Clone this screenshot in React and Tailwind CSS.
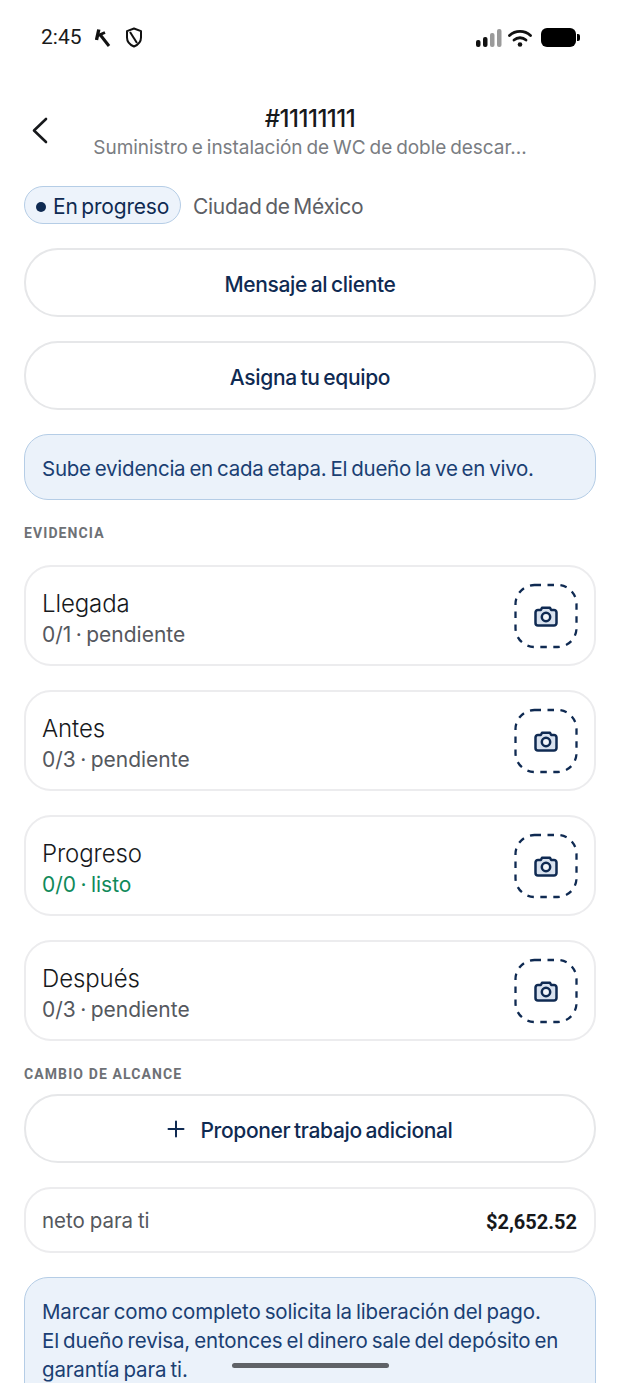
import React from "react";

function Camera() {
  return (
    <svg width="26" height="26" viewBox="0 0 26 26" fill="none">
      <path d="M2.500 9.500a2.500 2.500 0 0 1 2.500-2.500h2.800l1.200-2.200h8l1.200 2.200h2.800a2.500 2.500 0 0 1 2.500 2.500v10.500a2.500 2.500 0 0 1-2.500 2.500H5a2.500 2.500 0 0 1-2.500-2.500z" fill="#d9e2ef" stroke="#0f2a52" strokeWidth="2.500" strokeLinejoin="round" />
      <circle cx="13" cy="14" r="4.200" fill="#f3f6fb" stroke="#0f2a52" strokeWidth="2.500" />
    </svg>
  );
}

function Dashed() {
  return (
    <svg width="64" height="66" viewBox="0 0 64 66" fill="none" className="shrink-0">
      <rect x="1.500" y="2" width="61" height="62" rx="19" stroke="#0f2a52" strokeWidth="2.300" strokeDasharray="6.500 6.500" />
      <g transform="translate(19 20)"><Camera /></g>
    </svg>
  );
}

function Pill({ children }) {
  return (
    <div className="h-[69px] rounded-[34px] border-2 border-[#e6e7e9] bg-white flex items-center justify-center gap-[15px] text-[#0f2a52] text-[21px] font-[550] tracking-[-0.35px] [word-spacing:-1.500px] pt-[5px]">
      {children}
    </div>
  );
}

function Card({ title, sub, green }) {
  return (
    <div className="h-[101px] rounded-[27px] border-2 border-[#ececee] bg-white flex items-center justify-between pl-[16px] pr-[16px]">
      <div className="flex flex-col pt-[6px]">
        <span className="text-[24px] leading-[32px] text-[#17191c] font-light tracking-[-0.1px]">{title}</span>
        <span className={"text-[21px] leading-[29px] [word-spacing:-1.500px] " + (green ? "text-[#0f8a5a]" : "text-[#55585e]")}>{sub}</span>
      </div>
      <Dashed />
    </div>
  );
}

function Label({ children, className }) {
  return (
    <div className={"text-[14px] leading-[16px] font-bold tracking-[1.100px] text-[#6e7176] " + className} style={{ fontFamily: "Roboto, sans-serif" }}>{children}</div>
  );
}

export default function App() {
  return (
    <div className="relative w-[620px] h-[1383px] overflow-hidden bg-white" style={{ fontFamily: '"Inter", "Noto Sans", sans-serif' }}>
      {/* status bar */}
      <div className="h-[75px] flex items-center justify-between pl-[41px] pr-[40px]">
        <div className="flex items-center">
          <span className="text-[21px] text-[#1a1a1a] w-[54px]" style={{ fontFamily: "Roboto, sans-serif" }}>2:45</span>
          <svg width="16" height="18" viewBox="0 0 16 18" fill="none" className="mr-[14px]">
            <path d="M3.800 0.500L1.500 11" stroke="#111" strokeWidth="3.400" />
            <path d="M3 6.500l7-3" stroke="#111" strokeWidth="2.800" />
            <path d="M5 5.500L14 17" stroke="#111" strokeWidth="3" />
          </svg>
          <svg width="18" height="21" viewBox="0 0 18 21" fill="none">
            <path d="M9 1.500l7 2.600v6.400c0 4.200-3 7.400-7 9-4-1.600-7-4.800-7-9V4.100z" stroke="#111" strokeWidth="2" strokeLinejoin="round" />
            <path d="M5 5l7 11" stroke="#111" strokeWidth="2" />
          </svg>
        </div>
        <div className="flex items-center">
          <svg width="26" height="18" viewBox="0 0 26 18" className="mr-[6px]">
            <rect x="0" y="11" width="4.500" height="7" rx="2" fill="#111" />
            <rect x="7" y="8" width="4.500" height="10" rx="2" fill="#111" />
            <rect x="14" y="4" width="4.500" height="14" rx="2" fill="#9a9a9a" />
            <rect x="21" y="0" width="4.500" height="18" rx="2" fill="#9a9a9a" />
          </svg>
          <svg width="24" height="18" viewBox="0 0 24 18" fill="none" className="mr-[9px]">
            <path d="M1.500 6.500C7.500 1 16.500 1 22.500 6.500" stroke="#111" strokeWidth="2.800" strokeLinecap="round" />
            <path d="M6 11c3.500-3 8.500-3 12 0" stroke="#111" strokeWidth="2.800" strokeLinecap="round" />
            <circle cx="12" cy="15.500" r="2.300" fill="#111" />
          </svg>
          <div className="w-[35px] h-[19px] rounded-[6px] bg-black" />
          <div className="w-[3px] h-[7px] ml-[1px] rounded-r-[2px] bg-black" />
        </div>
      </div>

      {/* header */}
      <div className="relative h-[90px] flex flex-col items-center pt-[29px]">
        <svg width="18" height="28" viewBox="0 0 18 28" fill="none" className="absolute left-[31px] top-[41px]">
          <path d="M15 3L3 14.500 15 26" stroke="#17191c" strokeWidth="2.600" strokeLinecap="round" strokeLinejoin="round" />
        </svg>
        <div className="text-[24px] leading-[30px] font-[550] text-[#17191c] tracking-[-0.5px]">#11111111</div>
        <div className="text-[19px] leading-[27px] text-[#7a7d82] tracking-[-0.05px] [word-spacing:-1.300px]">Suministro e instalación de WC de doble descar...</div>
      </div>

      <div className="px-[24px] flex flex-col">
        {/* status */}
        <div className="flex items-center h-[38px] mt-[21px]">
          <div className="h-[38px] w-[157px] rounded-[19px] border border-[#b5cde6] bg-[#edf3fb] flex items-center pl-[11px] gap-[7px] pt-[3px]">
            <span className="w-[10px] h-[10px] rounded-full bg-[#0f2a52]" />
            <span className="text-[21px] font-normal text-[#0f2a52] tracking-[-0.2px] [word-spacing:-2px]">En progreso</span>
          </div>
          <span className="ml-[12px] text-[21px] text-[#5d6065] tracking-[-0.3px] [word-spacing:-2px] pt-[3px]">Ciudad de México</span>
        </div>

        <div className="flex flex-col gap-[24px] mt-[24px]">
          <Pill>Mensaje al cliente</Pill>
          <Pill>Asigna tu equipo</Pill>
          <div className="h-[66px] rounded-[24px] border border-[#b5cde6] bg-[#ebf2fa] flex items-center pl-[17px] pt-[5px] text-[20.500px] text-[#1a3f73] tracking-[-0.25px] [word-spacing:-1.500px]">
            Sube evidencia en cada etapa. El dueño la ve en vivo.
          </div>
        </div>

        <Label className="mt-[25px]">EVIDENCIA</Label>

        <div className="flex flex-col gap-[24px] mt-[24px]">
          <Card title="Llegada" sub="0/1 · pendiente" />
          <Card title="Antes" sub="0/3 · pendiente" />
          <Card title="Progreso" sub="0/0 · listo" green />
          <Card title="Después" sub="0/3 · pendiente" />
        </div>

        <Label className="mt-[25px]">CAMBIO DE ALCANCE</Label>

        <div className="flex flex-col gap-[24px] mt-[12px]">
          <Pill>
            <svg width="18" height="18" viewBox="0 0 18 18" fill="none" className="-mt-[5px]">
              <path d="M9 1.500v15M1.500 9h15" stroke="#0f2a52" strokeWidth="2" strokeLinecap="round" />
            </svg>
            <span>Proponer trabajo adicional</span>
          </Pill>
          <div className="h-[66px] rounded-[27px] border-2 border-[#ececee] bg-white flex items-center justify-between pl-[16px] pr-[17px] pt-[3px]">
            <span className="text-[20.500px] text-[#55585e] [word-spacing:-1px]">neto para ti</span>
            <span className="text-[20px] font-bold text-[#17191c]" style={{ fontFamily: "Roboto, sans-serif" }}>$2,652.52</span>
          </div>
          <div className="h-[130px] rounded-[24px] border border-[#b5cde6] bg-[#ebf2fa] pl-[17px] pr-[10px] pt-[19px] text-[20.500px] leading-[29px] text-[#1a3f73] tracking-[-0.15px] [word-spacing:-1.500px]">
            <div>Marcar como completo solicita la liberación del pago.</div>
            <div>El dueño revisa, entonces el dinero sale del depósito en</div>
            <div>garantía para ti.</div>
          </div>
        </div>
      </div>

      {/* home indicator */}
      <div className="absolute left-[232px] top-[1363px] w-[157px] h-[5px] rounded-full bg-[#5f6267]" />
    </div>
  );
}
